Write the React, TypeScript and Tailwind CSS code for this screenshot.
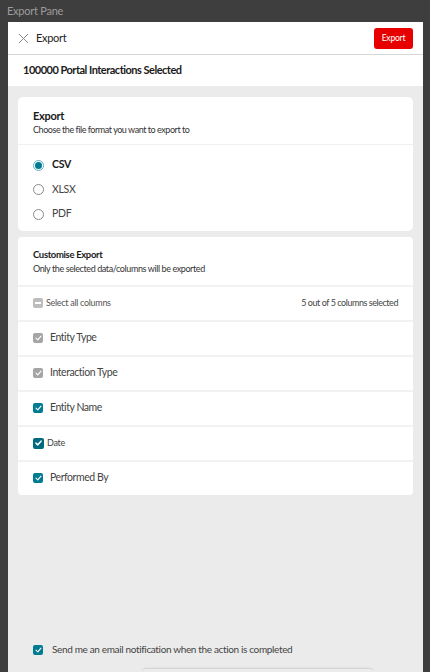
import React from "react";

const teal = "bg-[#007c92]";

function Check({ tone = "teal", big = false }: { tone?: "teal" | "gray" | "dark"; big?: boolean }) {
  const bg = tone === "gray" ? "bg-[#a5a5a5]" : tone === "dark" ? "bg-[#006b7e]" : teal;
  return (
    <span className={`${bg} ${big ? "w-[11px] h-[11px]" : "w-[10px] h-[10px]"} rounded-[2px] flex items-center justify-center shrink-0`}>
      <svg width="7" height="6" viewBox="0 0 7 6" fill="none">
        <path d="M1 3.2 L2.8 4.8 L6 1.2" stroke="white" strokeWidth={big ? 1.6 : 1.1} strokeLinecap="round" strokeLinejoin="round" />
      </svg>
    </span>
  );
}

function Radio({ on }: { on?: boolean }) {
  return (
    <span
      className={`w-[11px] h-[11px] rounded-full border shrink-0 flex items-center justify-center ${
        on ? "border-[#5fb3c2]" : "border-[#8a8a8a]"
      }`}
    >
      {on && <span className="w-[7px] h-[7px] rounded-full bg-[#007c92]" />}
    </span>
  );
}

const columns = [
  { label: "Entity Type", tone: "gray" as const },
  { label: "Interaction Type", tone: "gray" as const },
  { label: "Entity Name", tone: "teal" as const },
  { label: "Date", tone: "dark" as const, small: true },
  { label: "Performed By", tone: "teal" as const },
];

export default function App() {
  return (
    <div
      className="w-[430px] h-[672px] bg-[#3e3e3e] pl-[8px] pr-[7px] flex flex-col overflow-hidden text-[#333]"
      style={{ fontFamily: "Lato, 'Liberation Sans', sans-serif" }}
    >
      <div className="h-[22px] text-[11px] tracking-[-0.25px] leading-[22px] text-[#9c9c9c] -ml-[1px]">Export Pane</div>

      <div className="flex-1 flex flex-col bg-[#ebebeb] min-h-0">
        {/* header */}
        <div className="h-[33px] bg-white border-b border-[#d6d6d6] flex items-center pl-[10px] pr-[10px] shrink-0">
          <svg width="11" height="11" viewBox="0 0 11 11" className="shrink-0">
            <path d="M1 1 L10 10 M10 1 L1 10" stroke="#8a8a8a" strokeWidth="1" />
          </svg>
          <span className="ml-[7px] text-[11px] tracking-[-0.3px] text-[#222]">Export</span>
          <button className="ml-auto h-[21px] w-[39px] rounded-[3px] bg-[#e60000] text-white text-[8.5px] tracking-[-0.2px] leading-none">
            Export
          </button>
        </div>

        <div className="h-[31px] bg-white flex items-center pl-[15px] text-[11px] tracking-[-0.5px] font-bold text-[#1a1a1a] shrink-0">
          100000 Portal Interactions Selected
        </div>

        <div className="px-[10px] pt-[11px] flex flex-col gap-[6px]">
          {/* card 1 */}
          <div className="bg-white rounded-[5px]">
            <div className="h-[48px] border-b border-[#f0f0f0] px-[15px] pt-[11px]">
              <div className="text-[11px] tracking-[-0.3px] font-bold leading-[15px] text-[#1a1a1a]">Export</div>
              <div className="text-[9px] tracking-[-0.45px] leading-[13px] text-[#333]">Choose the file format you want to export to</div>
            </div>
            <div className="pt-[8px] pb-[4px] px-[15px]">
              {["CSV", "XLSX", "PDF"].map((f, i) => (
                <div key={f} className="h-[24.5px] flex items-center gap-[8px]">
                  <Radio on={i === 0} />
                  <span className={`text-[10.5px] tracking-[-0.3px] ${i === 0 ? "font-bold text-[#1a1a1a]" : "text-[#444]"}`}>{f}</span>
                </div>
              ))}
            </div>
          </div>

          {/* card 2 */}
          <div className="bg-white rounded-[4px]">
            <div className="h-[48px] px-[15px] pt-[11px]">
              <div className="text-[9.5px] tracking-[-0.35px] font-bold leading-[14px] text-[#1a1a1a]">Customise Export</div>
              <div className="text-[9px] tracking-[-0.4px] leading-[13px] text-[#333]">Only the selected data/columns will be exported</div>
            </div>
            <div className="h-[35px] border-t-2 border-[#f2f2f2] flex items-center px-[15px]">
              <span className="w-[10px] h-[10px] rounded-[2px] bg-[#bdbdbd] flex items-center justify-center">
                <span className="w-[6px] h-[1.5px] bg-white" />
              </span>
              <span className="ml-[3px] text-[9px] tracking-[-0.3px] text-[#555]">Select all columns</span>
              <span className="ml-auto text-[9px] tracking-[-0.45px] text-[#444]">5 out of 5 columns selected</span>
            </div>
            {columns.map((c) => (
              <div key={c.label} className="h-[35px] border-t-2 border-[#f2f2f2] flex items-center px-[15px]">
                <Check tone={c.tone} big={c.small} />
                <span
                  className={
                    c.small
                      ? "ml-[3px] text-[9px] tracking-[-0.3px] text-[#444]"
                      : "ml-[7px] text-[10.5px] tracking-[-0.45px] text-[#444]"
                  }
                >
                  {c.label}
                </span>
              </div>
            ))}
          </div>
        </div>

        <div className="flex-1" />

        <div className="flex items-center pl-[25px] pb-[12px]">
          <Check />
          <span className="ml-[9px] text-[10px] tracking-[-0.35px] text-[#444]">
            Send me an email notification when the action is completed
          </span>
        </div>
        <div className="h-[3px] ml-[135px] w-[230px] rounded-t-[3px] shadow-[0_-1px_2px_rgba(0,0,0,0.12)] bg-[#ececec] shrink-0" />
      </div>
    </div>
  );
}
